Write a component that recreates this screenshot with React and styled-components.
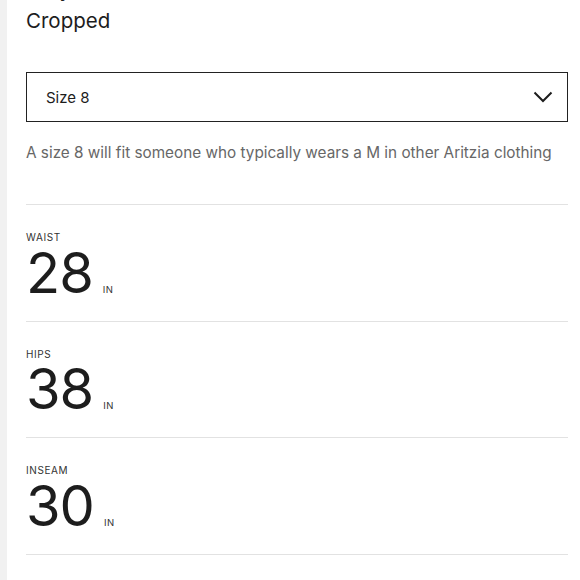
import styled, { createGlobalStyle } from "styled-components"

const GlobalStyle = createGlobalStyle`
    html, body {
        margin: 0;
        padding: 0;
        background: #ffffff;
        overflow: hidden;
    }
    body {
        font-family: Inter, "Noto Sans", sans-serif;
        color: #1d1d1d;
    }
`

const Page = styled.div`
    display: flex;
    min-height: 580px;
`

const SideStrip = styled.div`
    width: 7px;
    flex-shrink: 0;
    background-color: #f1f1f1;
`

const Panel = styled.main`
    flex: 1;
    padding: 0 12px 0 19px;
    display: flex;
    flex-direction: column;
`

const Heading = styled.h2`
    margin: -26.5px 0 0;
    font-size: 20.5px;
    line-height: 31px;
    font-weight: 400;
    color: #1d1d1d;
`

const Select = styled.button`
    margin-top: 36.5px;
    height: 50px;
    box-sizing: border-box;
    border: 1.5px solid #222222;
    background: #ffffff;
    display: flex;
    align-items: center;
    justify-content: space-between;
    padding: 0 14px 0 19px;
    font-family: inherit;
    font-size: 15px;
    color: #1d1d1d;
    cursor: pointer;
`

const Chevron = () => (
    <svg width="20" height="12" viewBox="0 0 20 12" fill="none">
        <path d="M1.5 1.5 L10 10 L18.5 1.5" stroke="#1d1d1d" strokeWidth="2" />
    </svg>
)

const Hint = styled.p`
    margin: 20px 0 0;
    font-size: 15.3px;
    line-height: 22px;
    color: #676767;
`

const List = styled.div`
    margin-top: 40px;
    border-top: 1px solid #e2e2e2;
`

const Row = styled.div`
    padding: 26px 0 20px;
    border-bottom: 1px solid #e2e2e2;
`

const Label = styled.div`
    margin-bottom: 1.5px;
    font-size: 10px;
    line-height: 12px;
    letter-spacing: 0.6px;
    text-transform: uppercase;
    color: #333333;
`

const Value = styled.div`
    display: flex;
    align-items: baseline;
`

const Number = styled.span`
    font-size: 56px;
    line-height: 56px;
    font-weight: 400;
    letter-spacing: -1px;
    color: #1d1d1d;
`

const Unit = styled.span`
    margin-left: 10px;
    font-size: 9.5px;
    letter-spacing: 0.5px;
    color: #333333;
`

const measurements = [
    { label: "Waist", value: 28 },
    { label: "Hips", value: 38 },
    { label: "Inseam", value: 30 },
]

export default function App() {
    return (
        <>
            <GlobalStyle />
            <Page>
                <SideStrip />
                <Panel>
                    <Heading>Fully<br />Cropped</Heading>
                    <Select>
                        <span>Size 8</span>
                        <Chevron />
                    </Select>
                    <Hint>A size 8 will fit someone who typically wears a M in other Aritzia clothing</Hint>
                    <List>
                        {measurements.map((m) => (
                            <Row key={m.label}>
                                <Label>{m.label}</Label>
                                <Value>
                                    <Number>{m.value}</Number>
                                    <Unit>IN</Unit>
                                </Value>
                            </Row>
                        ))}
                    </List>
                </Panel>
            </Page>
        </>
    )
}
